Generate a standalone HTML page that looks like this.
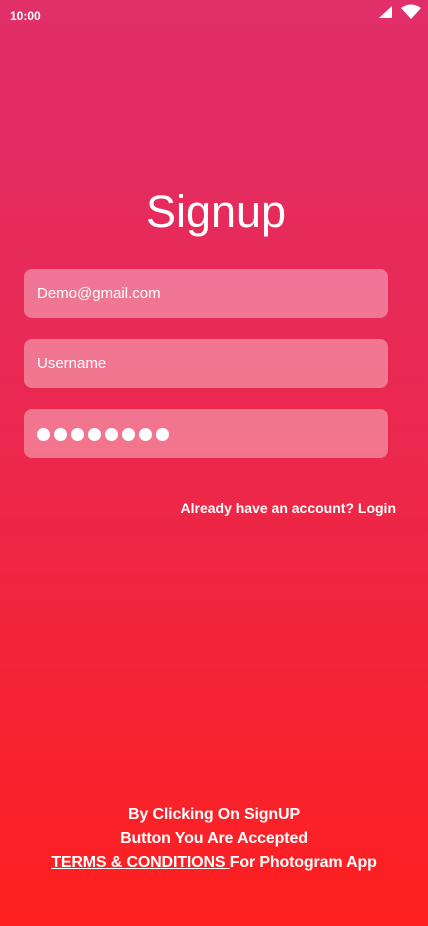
<!DOCTYPE html>
<html><head><style>
*{margin:0;padding:0;box-sizing:border-box}
body{width:428px;height:926px;overflow:hidden;background:linear-gradient(180deg,#e12f6a 0%,#ea2850 45%,#f52436 75%,#fe1f1e 100%);font-family:"Liberation Sans",sans-serif;color:#fff;position:relative}
.abs{position:absolute}
.f{position:absolute;left:24px;width:364px;height:49px;border-radius:8px;background:rgba(255,255,255,0.36);font-size:15px;padding-left:13px;line-height:49px}
.dot{display:inline-block;width:13px;height:13px;border-radius:50%;background:#fff;margin-right:4px;vertical-align:middle}
.b{font-size:16px;font-weight:bold;text-align:center;width:428px;left:0;letter-spacing:-0.15px}
</style></head><body>
<div class="abs" style="left:10px;top:9px;font-size:12px;font-weight:bold">10:00</div>
<svg class="abs" style="left:378px;top:5px" width="16" height="14"><polygon points="1,13 14,13 14,1" fill="#fff"/></svg>
<svg class="abs" style="left:401px;top:4px" width="20" height="16"><path d="M0,4 Q10,-3 20,4 L10,15 Z" fill="#fff"/></svg>
<div class="abs" style="left:2px;width:428px;top:186px;text-align:center;font-size:45px">Signup</div>
<div class="f" style="top:269px">Demo@gmail.com</div>
<div class="f" style="top:339px">Username</div>
<div class="f" style="top:409px"><span class="dot"></span><span class="dot"></span><span class="dot"></span><span class="dot"></span><span class="dot"></span><span class="dot"></span><span class="dot"></span><span class="dot"></span></div>
<div class="abs" style="right:32px;top:500px;font-size:14px;font-weight:bold">Already have an account? Login</div>
<div class="abs b" style="top:806px">By Clicking On SignUP</div>
<div class="abs b" style="top:830px">Button You Are Accepted</div>
<div class="abs b" style="top:854px"><u>TERMS &amp; CONDITIONS </u>For Photogram App</div>
</body></html>
